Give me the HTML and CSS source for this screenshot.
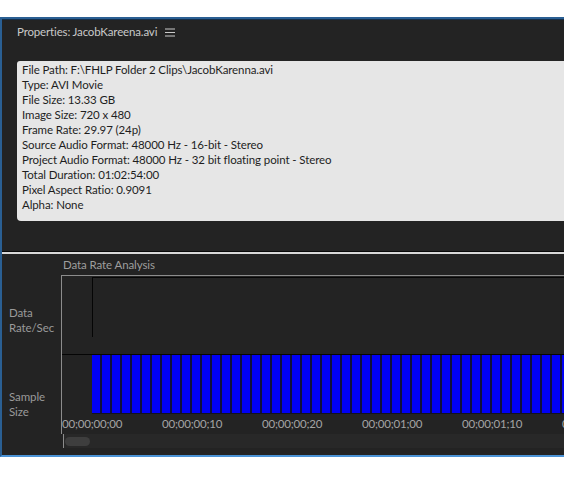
FILE: index.html
```html
<!DOCTYPE html>
<html>
<head>
<meta charset="utf-8">
<link rel="stylesheet" href="styles.css">
</head>
<body>
<div class="panel">
  <div class="header">
    <span class="title">Properties: JacobKareena.avi</span>
    <svg class="menu" width="10" height="9" viewBox="0 0 10 9"><path d="M0 1h10M0 4.5h10M0 8h10" stroke="#c9c9c9" stroke-width="1.2"/></svg>
  </div>
  <div class="info">
    <div>File Path: F:\FHLP Folder 2 Clips\JacobKarenna.avi</div>
    <div>Type: AVI Movie</div>
    <div>File Size: 13.33 GB</div>
    <div>Image Size: 720 x 480</div>
    <div>Frame Rate: 29.97 (24p)</div>
    <div>Source Audio Format: 48000 Hz - 16-bit - Stereo</div>
    <div>Project Audio Format: 48000 Hz - 32 bit floating point - Stereo</div>
    <div>Total Duration: 01:02:54:00</div>
    <div>Pixel Aspect Ratio: 0.9091</div>
    <div>Alpha: None</div>
  </div>
  <div class="separator"></div>
  <div class="analysis">
    <div class="heading">Data Rate Analysis</div>
    <div class="chart">
      <div class="labels">
        <div class="label rate">Data<br>Rate/Sec</div>
        <div class="label sample">Sample<br>Size</div>
      </div>
      <div class="plot">
        <div class="rate-area"><div class="rate-box"></div></div>
        <div class="sample-area"><div class="bars"></div></div>
        <div class="ruler">
          <span>00;00;00;00</span>
          <span>00;00;00;10</span>
          <span>00;00;00;20</span>
          <span>00;00;01;00</span>
          <span>00;00;01;10</span>
          <span>00;00;01;20</span>
        </div>
      </div>
    </div>
    <div class="scroll">
      <div class="scroll-track"><div class="thumb"></div></div>
    </div>
  </div>
</div>
</body>
</html>
```
FILE: styles.css
```css
html, body {
  margin: 0;
  padding: 0;
  background: #ffffff;
  overflow: hidden;
}
body {
  font-family: "Lato", "Open Sans", sans-serif;
  font-size: 11.5px;
  letter-spacing: -0.1px;
}
.panel {
  margin-top: 17px;
  height: 436px;
  width: 600px;
  background: #232323;
  border-top: 2px solid #2a5f93;
  border-left: 2px solid #2a5f93;
  border-bottom: 2px solid #4b93d6;
  box-shadow: inset 0 1px 0 #15304c;
  overflow: hidden;
}
.header {
  height: 42px;
  padding-left: 15px;
  display: flex;
  align-items: flex-start;
  padding-top: 5px;
  box-sizing: border-box;
  color: #c9c9c9;
  line-height: 16px;
  letter-spacing: -0.15px;
}
.menu {
  margin-left: 8px;
  margin-top: 4px;
}
.info {
  margin-left: 15px;
  height: 160px;
  box-sizing: border-box;
  background: #e6e6e6;
  border-radius: 3px 0 0 4px;
  padding: 1px 0 0 5px;
  color: #1e1e1e;
  line-height: 15px;
  white-space: nowrap;
}
.separator {
  margin-top: 30px;
  height: 1px;
  background: #080808;
  border-bottom: 2px solid #d8d8d8;
}
.heading {
  padding-left: 61px;
  height: 21px;
  line-height: 22px;
  color: #9e9e9e;
}
.chart {
  display: flex;
}
.labels {
  width: 59px;
  flex: none;
  color: #9a9a9a;
  padding-left: 7px;
  box-sizing: border-box;
  line-height: 15px;
}
.label.rate {
  padding-top: 30px;
  height: 80px;
  box-sizing: border-box;
}
.label.sample {
  padding-top: 34px;
}
.plot {
  flex: 1;
  border-left: 1px solid #8c8c8c;
  border-top: 1px solid #8c8c8c;
}
.rate-area {
  height: 79px;
  box-sizing: border-box;
  padding-top: 1px;
  padding-left: 30px;
  border-bottom: 1px solid #050505;
}
.rate-box {
  height: 59px;
  border-left: 1px solid #050505;
  border-top: 1px solid #050505;
}
.sample-area {
  height: 59px;
  padding-left: 30px;
}
.bars {
  height: 58px;
  border-bottom: 1px solid #111122;
  background: repeating-linear-gradient(90deg, #0000f6 0 8px, #10103a 8px 10px);
}
.ruler {
  display: flex;
  height: 20px;
  line-height: 20px;
  color: #a3a3a3;
  white-space: nowrap;
  letter-spacing: -0.2px;
}
.ruler span {
  width: 100px;
  flex: none;
}
.scroll {
  padding-left: 61px;
}
.scroll-track {
  height: 14px;
  background: #282828;
  border-left: 1px solid #8c8c8c;
  box-sizing: border-box;
  padding: 3px 0 0 1px;
}
.thumb {
  width: 25px;
  height: 9px;
  border-radius: 5px;
  background: #3e3e3e;
}
```
